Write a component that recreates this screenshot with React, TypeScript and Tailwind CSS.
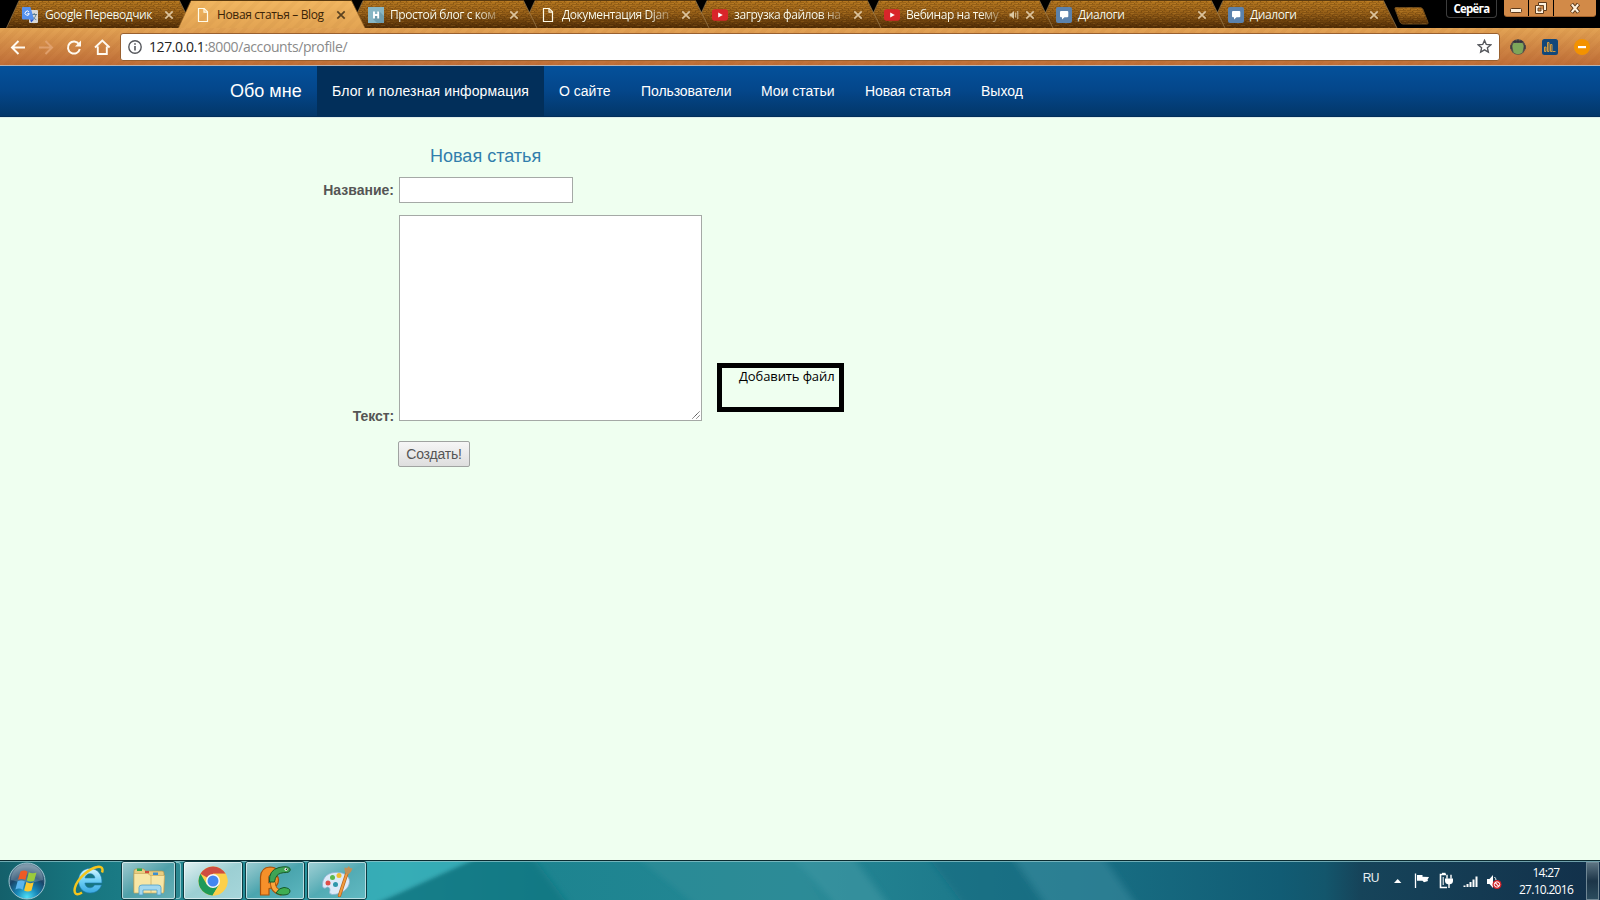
import type { ReactNode } from 'react';

const UI = "font-['Open_Sans','Noto_Sans',sans-serif]";

/* ---------- favicons ---------- */

function TranslateIcon() {
  return (
    <svg viewBox="0 0 16 16" className="-ml-[2px] mr-px size-4 shrink-0">
      <rect x="7" y="3" width="9" height="13" rx="1" fill="#d9d9d9" />
      <path d="M9.5 7.5h5.5M12.2 6v1.5M14 7.5c-.4 2.2-1.8 3.8-3.5 4.8M10.5 9.5c.8 1.4 2 2.5 3.8 3.2" stroke="#5e7f93" strokeWidth="1" fill="none" />
      <path d="M1 0h7.500l3.500 12.500H1a1 1 0 0 1-1-1V1a1 1 0 0 1 1-1z" fill="#5590ee" />
      <path d="M8 12.500h4l-2.800 3z" fill="#2a56c6" />
      <path d="M7 5A2.100 2.100 0 1 0 7.300 6.700H5.300" stroke="#fff" strokeWidth="1" fill="none" />
    </svg>
  );
}

function PageIcon({ className = '' }: { className?: string }) {
  return (
    <svg viewBox="0 0 16 16" className={`size-4 shrink-0 ${className}`}>
      <path d="M3.500 1.500h5.700l3.300 3.300v9.700h-9z" fill="none" stroke="#fffbe8" strokeWidth="1.200" />
      <path d="M9 1.500v3.700h3.500" fill="none" stroke="#fffbe8" strokeWidth="1.200" />
    </svg>
  );
}

function HabrIcon() {
  return (
    <svg viewBox="0 0 16 16" className="size-4 shrink-0">
      <rect width="16" height="16" fill="#88b6c4" />
      <path d="M11 4l5 5v7H9l-4-4z" fill="#6f9dad" />
      <path d="M6 4.500v7M10.200 4.500v7M6 8h4" stroke="#fff" strokeWidth="1.900" />
    </svg>
  );
}

function YouTubeIcon() {
  return (
    <svg viewBox="0 0 16 16" className="size-4 shrink-0">
      <rect y="2.300" width="16" height="11.400" rx="2.600" fill="#d9252a" />
      <path d="M6.200 5.500v5l4.600-2.500z" fill="#fff" />
    </svg>
  );
}

function DialogIcon() {
  return (
    <svg viewBox="0 0 16 16" className="size-4 shrink-0">
      <rect width="16" height="16" rx="2" fill="#5b82ad" />
      <path d="M5 4h6.300a1 1 0 0 1 1 1v4.300a1 1 0 0 1-1 1H8.500L6 12.500v-2.200H5a1 1 0 0 1-1-1V5a1 1 0 0 1 1-1z" fill="#fff" />
    </svg>
  );
}

/* ---------- browser chrome ---------- */

function Defs() {
  return (
    <svg className="absolute size-0" aria-hidden="true">
      <defs>
        <pattern id="bricks" width="14" height="8" patternUnits="userSpaceOnUse">
          <path d="M0 .5h6M8 .5h5M3 2.500h7M11.500 2.500h2.500M0 4.500h4M6 4.500h7M2 6.500h5M9 6.500h5" stroke="#3a1e00" strokeOpacity=".2" />
          <path d="M6.500 1v1M12.500 1v1M3.500 3v1M10.500 3v1M5.500 5v1M1.500 7v1M8.500 7v1" stroke="#2a1400" strokeOpacity=".28" />
          <path d="M1 1.500h4M8 3.500h2M7 5.500h3M11 7.500h2" stroke="#ffc050" strokeOpacity=".12" />
        </pattern>
        <linearGradient id="wood" x1="0" y1="0" x2="0" y2="1">
          <stop offset="0" stopColor="#b3761f" />
          <stop offset=".45" stopColor="#955e17" />
          <stop offset="1" stopColor="#4f2c06" />
        </linearGradient>
        <linearGradient id="amber" x1="0" y1="0" x2="0" y2="1">
          <stop offset="0" stopColor="#f1b660" />
          <stop offset="1" stopColor="#e3a453" />
        </linearGradient>
        <pattern id="diag" width="9" height="9" patternUnits="userSpaceOnUse" patternTransform="rotate(45)">
          <rect width="4" height="9" fill="#8a4a10" fillOpacity=".05" />
        </pattern>
      </defs>
    </svg>
  );
}

interface TabProps {
  icon: ReactNode;
  title: string;
  z: string;
  active?: boolean;
  audio?: boolean;
  faded?: boolean;
}

function Tab({ icon, title, z, active, audio, faded }: TabProps) {
  const shape = 'M-1.500 28L11 1H171.500L185 28z';
  let mask = '';
  if (audio) mask = '[mask-image:linear-gradient(to_right,#000_74px,#0005_92px)]';
  else if (faded) mask = '[mask-image:linear-gradient(to_right,#000_86px,#0004_108px)]';
  return (
    <div className={`relative flex h-7 w-[172px] shrink-0 items-center pl-4 pt-[2px] ${z}`}>
      <svg className="absolute -left-[2px] top-0 h-7 w-[188px]" viewBox="-2 0 188 28">
        <path d={shape} fill={active ? 'url(#amber)' : 'url(#wood)'} />
        <path d={shape} fill={active ? 'url(#diag)' : 'url(#bricks)'} />
        <path d="M-1.500 28L11 .5H171.500L185 28" fill="none" stroke={active ? '#9a6526' : '#a98a5c'} strokeOpacity=".6" />
        <path d="M11 .5H172" stroke="#5a3a10" />
      </svg>
      <div className="relative flex items-center">
        {icon}
        <span
          className={`ml-[6px] whitespace-nowrap text-[12px] leading-4 ${UI} ${audio ? 'w-[98px]' : 'w-[112px]'} ${mask} ${
            active
              ? 'tracking-[-0.36px] text-[#3b2407]'
              : 'font-medium tracking-[-0.42px] text-[#fffbe8] [text-shadow:0_0_1px_#00000080]'
          }`}
        >
          {title}
        </span>
        {audio && (
          <svg viewBox="0 0 10 10" className="ml-1 h-[10px] w-3 shrink-0" fill="none" stroke="#dcc9a4">
            <path d="M.5 3.500h1.700L5 1v8L2.200 6.500H.5z" fill="#dcc9a4" stroke="none" />
            <path d="M6.700 2.500v5M8.800 1v8" />
          </svg>
        )}
        <svg viewBox="0 0 12 12" className={audio ? 'ml-1 size-3 shrink-0' : 'ml-[6px] size-3 shrink-0'}>
          <path d="M2.300 2.300l7.400 7.400M9.700 2.300L2.300 9.700" stroke={active ? '#5b4220' : '#dcc39c'} strokeWidth="1.700" />
        </svg>
      </div>
    </div>
  );
}

function TabStrip() {
  return (
    <div className="flex h-7 items-start bg-black pl-2">
      <Tab z="z-[9]" icon={<TranslateIcon />} title="Google Переводчик" />
      <Tab z="z-10" icon={<PageIcon className="-ml-px" />} title="Новая статья – Blog" active />
      <Tab z="z-[8]" icon={<HabrIcon />} title="Простой блог с ком" faded />
      <Tab z="z-[7]" icon={<PageIcon />} title="Документация Djan" faded />
      <Tab z="z-[6]" icon={<YouTubeIcon />} title="загрузка файлов на" faded />
      <Tab z="z-[5]" icon={<YouTubeIcon />} title="Вебинар на тему" audio />
      <Tab z="z-[4]" icon={<DialogIcon />} title="Диалоги" />
      <Tab z="z-[3]" icon={<DialogIcon />} title="Диалоги" />
      <svg className="ml-[9px] mt-[6px] h-[19px] w-[36px] shrink-0" viewBox="0 0 36 19">
        <path d="M3 1.500h24q2 0 3 2l5 13q.5 1.500-1 1.500H10q-2 0-3-2L2 3q-.5-1.500 1-1.500z" fill="url(#wood)" stroke="#6d4a1c" />
        <path d="M3 1.500h24q2 0 3 2l5 13q.5 1.500-1 1.500H10q-2 0-3-2L2 3z" fill="url(#bricks)" />
      </svg>
      <div className={`ml-auto flex h-[18px] w-[51px] shrink-0 items-center justify-center rounded-b-[4px] border border-t-0 border-[#3d3d3d] text-[11.5px] font-bold tracking-[-0.8px] text-white ${UI}`}>
        Серёга
      </div>
      <div className="ml-[7px] mr-1 flex h-[17px] w-[92px] shrink-0 gap-px overflow-hidden rounded-b-[3px] border-b border-[#a5642d]">
        <div className="flex w-6 items-center justify-center bg-[#d28a48]">
          <svg viewBox="0 0 14 14" className="mt-[3px] size-[14px]">
            <rect x="1.500" y="5.500" width="11" height="4" rx="1" fill="#fff1dc" stroke="#5d3a1b" />
          </svg>
        </div>
        <div className="flex w-6 items-center justify-center bg-[#d28a48]">
          <svg viewBox="0 0 14 14" className="size-[14px]">
            <path d="M4.500 1.500h8v8h-3v3h-8v-8h3z" fill="#fff1dc" stroke="#5d3a1b" />
            <path d="M4.500 4.500h5v5M4 7h3v3H4z" fill="#d28a48" stroke="#5d3a1b" strokeWidth=".9" />
          </svg>
        </div>
        <div className="flex flex-1 items-center justify-center bg-[#d28a48]">
          <svg viewBox="0 0 14 14" className="size-[14px]">
            <path d="M3.500 3l7 8.500M10.500 3l-7 8.500" stroke="#5d3a1b" strokeWidth="4" />
            <path d="M3.800 3.400l6.400 7.700M10.200 3.400l-6.400 7.700" stroke="#fff1dc" strokeWidth="2.200" />
          </svg>
        </div>
      </div>
    </div>
  );
}

function Toolbar() {
  return (
    <div className="flex h-[38px] items-center border-b border-[#b9b3b0] bg-[repeating-linear-gradient(135deg,transparent_0_4px,#8a3a000c_4px_8px),linear-gradient(to_bottom,#e3a455,#d28a47_45%,#bf6e38)]">
      <svg viewBox="0 0 112 20" className="h-5 w-28 shrink-0" fill="none" stroke="#fffaf0" strokeWidth="2">
        <path d="M25 10.500H12.500M18.500 4l-6.500 6.500 6.500 6.500" />
        <path d="M39 10.500h12.500M45.500 4l6.500 6.500-6.500 6.500" stroke="#e3a675" strokeOpacity=".8" />
        <path d="M79 7.300A6 6 0 1 0 79.800 12" />
        <path d="M81 3.500v6h-6z" fill="#fffaf0" stroke="none" />
        <path d="M95 10.500l7.300-7 7.300 7M97.800 9.500v7.500h9V9.500" strokeWidth="1.900" />
      </svg>
      <div className="ml-2 flex h-7 w-[1380px] shrink-0 items-center rounded-[3px] border border-[#99602f] bg-white pl-[7px] pr-[7px]">
        <svg viewBox="0 0 14 14" className="size-[14px] shrink-0" fill="none" stroke="#55575c" strokeWidth="1.400">
          <circle cx="7" cy="7" r="6.200" />
          <path d="M7 6v4.500M7 3.300v1.500" strokeWidth="1.600" />
        </svg>
        <div className={`ml-[7px] whitespace-nowrap text-[14px] leading-5 tracking-[-0.4px] text-[#8a8a8a] ${UI}`}>
          <span className="text-[#222]">127.0.0.1</span>:8000/accounts/profile/
        </div>
        <svg viewBox="0 0 16 16" className="ml-auto size-[15px] shrink-0" fill="none" stroke="#55575c" strokeWidth="1.500">
          <path d="M8 1.500l1.900 4.300 4.700.5-3.500 3.100 1 4.600L8 11.600 3.900 14l1-4.600L1.400 6.300l4.700-.5z" />
        </svg>
      </div>
      <svg viewBox="0 0 16 16" className="ml-[10px] size-4 shrink-0">
        <circle cx="8" cy="8" r="7.700" fill="#564f4a" />
        <path d="M3.500 4h9l1.200 3-1.200 6.500q-4.500 3.500-9 0L2.300 7z" fill="#7da65a" />
        <path d="M3 2.800h10M5 1.300v2.500M8 .5v3M11 1.300v2.500M1 6v4M15 6v4" stroke="#2d2c3a" />
      </svg>
      <svg viewBox="0 0 16 16" className="ml-4 size-4 shrink-0">
        <rect width="16" height="16" rx="2.500" fill="#12477a" />
        <path d="M2.500 12.500V8h1.500v4.500zM5.500 12.500v-9h1.500v9zM8.500 12.500v-7h1.500v7zM10.500 12.500h3" fill="#4b4d50" stroke="#e0a33c" strokeWidth=".9" />
      </svg>
      <svg viewBox="0 0 16 16" className="ml-4 size-4 shrink-0">
        <circle cx="8" cy="8" r="8" fill="#f39200" />
        <rect x="4" y="7" width="8" height="2.200" fill="#fff" />
      </svg>
    </div>
  );
}

/* ---------- page ---------- */

function Navbar() {
  const item = 'flex items-center whitespace-nowrap pl-[15px]';
  return (
    <nav className="flex h-[51px] border-b border-[#022f5a] bg-linear-to-b from-[#04519b] via-[#04468a] to-[#033769] pl-[230px] font-['Liberation_Sans',Arial,sans-serif] text-[14px] text-white">
      <div className="flex w-[87px] items-center pt-px text-[18px]">Обо мне</div>
      <div className={`${item} w-[227px] bg-[#022f5a] tracking-[0.14px]`}>Блог и полезная информация</div>
      <div className={`${item} w-[82px]`}>О сайте</div>
      <div className={`${item} w-[120px] tracking-[-0.08px]`}>Пользователи</div>
      <div className={`${item} w-[104px]`}>Мои статьи</div>
      <div className={`${item} w-[116px] tracking-[-0.05px]`}>Новая статья</div>
      <div className={`${item} w-[72px]`}>Выход</div>
    </nav>
  );
}

function ArticleForm() {
  return (
    <main className="flex flex-1 items-start border-t border-[#dfeeea] bg-[#effff0] font-['Liberation_Sans',Arial,sans-serif] text-[14px] text-[#555]">
      <div className="w-[702px] shrink-0 pt-7">
        <h1 className="pl-[430px] text-[18px] leading-5 text-[#317eac]">Новая статья</h1>
        <div className="mt-[11px] flex items-center">
          <label className="w-[394px] text-right font-bold leading-5">Название:</label>
          <div className="ml-[5px] h-[26px] w-[174px] border border-[#a5a9a6] bg-white" />
        </div>
        <div className="mt-3 flex items-end">
          <label className="w-[394px] text-right font-bold leading-[10px] tracking-[-0.1px]">Текст:</label>
          <div className="ml-[5px] flex h-[206px] w-[303px] items-end justify-end border border-[#a5a9a6] bg-white">
            <svg viewBox="0 0 10 10" className="size-[10px]" stroke="#444" strokeDasharray="1.300 .4">
              <path d="M1.500 8.500L8.500 1.500M5.500 8.500L8.500 5.500" />
            </svg>
          </div>
        </div>
        <button className="ml-[398px] mt-5 flex h-[26px] w-[72px] items-center justify-center whitespace-nowrap rounded-[2px] border border-[#a0a3a1] bg-linear-to-b from-[#f6f6f6] to-[#dedede] tracking-[-0.2px]">
          Создать!
        </button>
      </div>
      <div className={`ml-[15px] mt-[245px] h-[49px] w-[127px] border-[5px] border-black pl-[17px] text-[13px] leading-[16px] tracking-[-0.1px] text-black ${UI}`}>
        <span className="whitespace-nowrap">Добавить файл</span>
      </div>
    </main>
  );
}

/* ---------- taskbar ---------- */

function Backdrop() {
  return (
    <svg className="absolute inset-0 h-10 w-full" viewBox="0 0 1600 40" preserveAspectRatio="none">
      <defs>
        <linearGradient id="sea" x1="0" x2="1">
          <stop offset="0" stopColor="#14606b" />
          <stop offset=".05" stopColor="#17757f" />
          <stop offset=".25" stopColor="#2f9faa" />
          <stop offset=".34" stopColor="#1d8490" />
          <stop offset=".5" stopColor="#248794" />
          <stop offset=".68" stopColor="#186f84" />
          <stop offset=".8" stopColor="#115c74" />
          <stop offset=".828" stopColor="#13566c" />
          <stop offset=".85" stopColor="#16445a" />
          <stop offset="1" stopColor="#12304a" />
        </linearGradient>
        <filter id="soft" x="-10%" width="120%">
          <feGaussianBlur stdDeviation="4 0.500" />
        </filter>
      </defs>
      <rect width="1600" height="40" fill="url(#sea)" />
      <g filter="url(#soft)">
        <path d="M360 0h110L380 40h-20z" fill="#3ab0ba" fillOpacity=".8" />
        <path d="M475 0h60l30 40H385z" fill="#127581" fillOpacity=".8" />
        <path d="M640 0h155l30 40H690z" fill="#38929f" fillOpacity=".35" />
        <path d="M795 0h60l30 40h-55z" fill="#4199a6" fillOpacity=".55" />
        <path d="M930 0h85l25 40H960z" fill="#126a80" fillOpacity=".5" />
        <path d="M1015 0h90l28 40h-90z" fill="#36899c" fillOpacity=".6" />
      </g>
      <path d="M0 .5h1600" stroke="#0b2b30" />
      <path d="M0 1.500h1600" stroke="#8fc4c9" strokeOpacity=".75" />
    </svg>
  );
}

function TaskButton({ children, className }: { children: ReactNode; className: string }) {
  return (
    <div className={`flex h-[39px] shrink-0 items-center justify-center rounded-[3px] border border-[#0d3c42] ${className}`}>
      <div className="flex size-full items-center justify-center rounded-[2px] border border-[#ffffff90]">{children}</div>
    </div>
  );
}

function StartOrb() {
  return (
    <svg viewBox="0 0 40 40" className="ml-[7px] size-10 shrink-0">
      <defs>
        <radialGradient id="orb" cx=".5" cy=".95" r=".85">
          <stop offset="0" stopColor="#4fe0f5" />
          <stop offset=".35" stopColor="#1787b8" />
          <stop offset=".7" stopColor="#1a4467" />
          <stop offset="1" stopColor="#5f8096" />
        </radialGradient>
      </defs>
      <circle cx="20" cy="20" r="18" fill="url(#orb)" stroke="#9fc4cf" strokeWidth="1" />
      <path d="M4 19A16 16 0 0 1 36 19Q20 24 4 19z" fill="#fff" fillOpacity=".2" />
      <path d="M13.500 10.500q4-2 7 .2L18.300 19q-3.500-2-7.300-.2z" fill="#ee5a24" />
      <path d="M21.800 11.200q3.700 2 7.700.3l-2.300 8.200q-4 1.700-7.400-.2z" fill="#9acb3c" />
      <path d="M10.600 20.300q3.900-1.800 7.300.2l-2.200 8.200q-3.400-2.200-7.300-.3z" fill="#5bb5ee" />
      <path d="M19.300 21.100q3.500 2 7.400.2l-2.200 8.300q-3.900 1.800-7.400-.2z" fill="#fcc92f" />
    </svg>
  );
}

function ExplorerE() {
  return (
    <svg viewBox="0 0 32 32" className="ml-[26px] size-8 shrink-0">
      <defs>
        <linearGradient id="ie" x1="0" y1="0" x2="0" y2="1">
          <stop offset="0" stopColor="#d5f6ff" />
          <stop offset=".5" stopColor="#6fd0f6" />
          <stop offset="1" stopColor="#39a9e2" />
        </linearGradient>
      </defs>
      <path d="M17 3.500c-7 0-11.500 5-11.500 12S10 28 17 28c5.500 0 9.800-2.800 11.500-8h-7c-.9 1.800-2.500 2.800-4.500 2.800-3 0-4.900-2-5.100-4.800h17C29.500 9.500 24.500 3.500 17 3.500zM12 13c.5-2.600 2.300-4.300 5.100-4.300s4.500 1.700 4.800 4.300z" fill="url(#ie)" stroke="#1c7bb0" strokeWidth=".6" />
      <path d="M29 7.500C30.500 3.500 28.500.8 24 2 15.500 4 4.500 13.500 2 22.500c-1.600 6.500 1.500 8.500 7 5" fill="none" stroke="#f4c51c" strokeWidth="2.500" />
    </svg>
  );
}

function FolderIcon() {
  return (
    <svg viewBox="0 0 34 30" className="h-[30px] w-[34px]">
      <path d="M2 5q0-2 2-2h8l1.500 2H30q2 0 2 2v19H2z" fill="#e8cd80" stroke="#b3944a" strokeWidth=".7" />
      <path d="M5 2.500h5v2.500H5z" fill="#2fa84a" />
      <path d="M13 5h4v2.500h-4z" fill="#cf4b3b" />
      <path d="M21 6.500h5V9h-5z" fill="#3d8fd0" />
      <path d="M2 7.500h14l2 2h14.500L31.500 27H2z" fill="#f7e6a6" stroke="#caa95c" strokeWidth=".7" />
      <path d="M19 10v17" stroke="#d6bb70" />
      <path d="M7 29v-7.500q0-2.500 3-2.500h16q3 0 3 2.500V29h-4v-5H11v5z" fill="#a3d8ef" stroke="#4b9fcb" strokeWidth=".8" />
    </svg>
  );
}

function ChromeIcon() {
  return (
    <svg viewBox="0 0 30 30" className="size-[30px]">
      <circle cx="15" cy="15" r="14.500" fill="#fcd04a" />
      <path d="M15 15L2.500 7.700A14.500 14.500 0 0 1 27.600 7.800H15z" fill="#cf4d41" />
      <path d="M15 15L8.800 18.500 2.500 7.700A14.500 14.500 0 0 0 14.500 29.500L21.200 18.600z" fill="#1e9a58" />
      <path d="M15 15l6.200 3.600L14.500 29.500A14.500 14.500 0 0 0 27.600 7.800H15z" fill="#fcd04a" />
      <circle cx="15" cy="15" r="7" fill="#f7f7f7" />
      <circle cx="15" cy="15" r="5.500" fill="#4286f0" />
    </svg>
  );
}

function PyCharmIcon() {
  return (
    <svg viewBox="0 0 32 32" className="size-8" strokeLinejoin="round">
      <path d="M1.500 30V12Q2 2.500 11 2q5 0 7 3l-3 4q6 2 4 9-2 5-9 5.500V30z" fill="#f6902a" stroke="#a8520c" strokeWidth="1.200" />
      <path d="M9.500 18v-6q.5-3 4-2.500-2.500 4-1.500 8.500z" fill="#4fa6ae" stroke="#a8520c" strokeWidth=".8" />
      <path d="M14 17q-1 9 9 11" fill="none" stroke="#a8520c" strokeWidth="5.500" />
      <path d="M14 16.500q-1 9 9 11" fill="none" stroke="#fba63e" strokeWidth="3.800" />
      <path d="M10.500 17Q9.500 5 20 2.500q9-2 11 1 1 3.500-3.500 4-7 0-9.500 3-2 2.500-2.500 6.500z" fill="#3fa455" stroke="#175a2a" strokeWidth="1" />
      <path d="M17 28q3-5.500 8-5.500 6 .5 6 3.500 0 4-7 4-4 0-7-2z" fill="#3fae52" stroke="#175a2a" strokeWidth="1" />
      <circle cx="27" cy="4.300" r="1.500" fill="#fff" />
      <circle cx="27.400" cy="4.300" r=".8" fill="#111" />
    </svg>
  );
}

function PaintIcon() {
  return (
    <svg viewBox="0 0 32 32" className="size-8">
      <path d="M13 7.500C5 8.500 1 14 1.500 21q.5 3 3 2 2.500-2 4 0 1 2 0 4-.5 2 3 2.500c9 0 17-6 17-13C28.500 10.500 22 6.500 13 7.500z" fill="#dceaf8" stroke="#8fb1cf" strokeWidth=".8" />
      <circle cx="14.500" cy="19.500" r="2.500" fill="#2f97aa" />
      <circle cx="7" cy="18" r="2.500" fill="#de4f48" />
      <circle cx="11.500" cy="12.500" r="2.500" fill="#5cb84e" />
      <circle cx="18" cy="10.500" r="2.500" fill="#f2bd2f" />
      <path d="M26 8L18.500 30.500" stroke="#b8651c" strokeWidth="3.400" strokeLinecap="round" />
      <path d="M26 8L18.500 30.500" stroke="#f09a3e" strokeWidth="2" strokeLinecap="round" />
      <path d="M24.500 8.500q-1.500-4-1-6L26 3l2-2 1 2 2.500.5q-1 4-4.500 6z" fill="#bf9158" />
    </svg>
  );
}

function Tray() {
  return (
    <div className="ml-auto flex h-[39px] items-center text-white">
      <span className="-mt-[5px] mr-[15px] font-['Liberation_Sans',Arial,sans-serif] text-[12px] tracking-[-0.5px] text-[#e8f0f3]">RU</span>
      <svg viewBox="0 0 108 20" className="h-5 w-[108px] shrink-0">
        <path d="M0 12L3.700 8l3.700 4z" fill="#fff" />
        <path d="M21.500 2.500v14.500" stroke="#fff" strokeWidth="1.300" />
        <path d="M23 4h5.500v1.800l6.500.2-1.500 2.800.5 1.200-4 1.300-1.500-1.500H23z" fill="#fff" />
        <path d="M52 3.500h-5.500v13H53" fill="none" stroke="#fff" strokeWidth="1.600" />
        <path d="M48 2.500h3.500" stroke="#fff" strokeWidth="1.400" />
        <path d="M49.200 6v8" stroke="#fff" strokeWidth="1" />
        <path d="M51 7.500h8v2.500q0 3-4 3.500-4-.5-4-3.500z" fill="#fff" />
        <path d="M53 3.800v4M57 3.800v4M55 12v5" stroke="#fff" strokeWidth="1.400" />
        <path d="M70.500 16v-1.500M73.500 16v-3M76.500 16v-5M79.500 16V8.500M82.500 16V5.500" stroke="#fff" strokeWidth="2" />
        <path d="M93 8h2.500L99 4v13l-3.500-4H93z" fill="#fff" />
        <path d="M100.500 6q1.500 1.500 1.500 3" stroke="#fff" fill="none" />
        <circle cx="103" cy="13.500" r="4.500" fill="#d2232a" />
        <circle cx="103" cy="13.500" r="2.700" fill="none" stroke="#fff" strokeWidth="1" />
        <path d="M101.200 11.700l3.600 3.600" stroke="#fff" strokeWidth="1.100" />
      </svg>
      <div className={`ml-4 w-[56px] text-center text-[12px] leading-[17px] tracking-[-0.7px] ${UI}`}>
        <div>14:27</div>
        <div>27.10.2016</div>
      </div>
      <div className="ml-3 h-[38px] w-[13px] border border-[#6f8794] bg-linear-to-b from-[#5c7482] via-[#1c3548] to-[#2b4c5e]" />
      <div className="w-px" />
    </div>
  );
}

function Taskbar() {
  return (
    <footer className="relative h-10">
      <Backdrop />
      <div className="relative flex h-10 items-center pt-px">
        <StartOrb />
        <ExplorerE />
        <TaskButton className="ml-4 w-[55px] bg-linear-to-br from-[#9fcbd0] via-[#4fa0a9] to-[#66b0b7]">
          <FolderIcon />
        </TaskButton>
        <div className="h-[37px] w-[5px] rounded-r-[3px] border border-l-0 border-[#8fc6ca] bg-[#2b8790]" />
        <TaskButton className="ml-[2px] w-[60px] bg-linear-to-br from-[#e2f1f2] via-[#9ccfd3] to-[#a6d6da]">
          <ChromeIcon />
        </TaskButton>
        <TaskButton className="ml-[2px] w-[60px] bg-linear-to-br from-[#9ccdd2] via-[#4aa5ae] to-[#5db7bf]">
          <PyCharmIcon />
        </TaskButton>
        <TaskButton className="ml-[2px] w-[60px] bg-linear-to-br from-[#9fd0d5] via-[#52abb4] to-[#62bac2]">
          <PaintIcon />
        </TaskButton>
        <Tray />
      </div>
    </footer>
  );
}

export default function App() {
  return (
    <div className="flex h-[900px] w-[1600px] flex-col overflow-hidden">
      <Defs />
      <TabStrip />
      <Toolbar />
      <Navbar />
      <ArticleForm />
      <Taskbar />
    </div>
  );
}
